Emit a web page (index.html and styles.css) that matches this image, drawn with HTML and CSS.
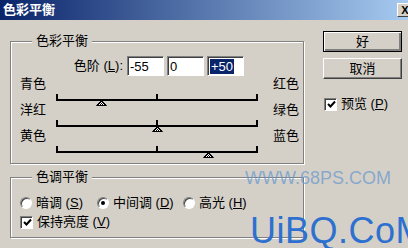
FILE: index.html
```html
<!DOCTYPE html>
<html lang="zh-CN">
<head>
    <meta charset="UTF-8">
    <title>色彩平衡</title>
    <link rel="stylesheet" href="styles.css">
</head>
<body>
    <div class="dialog">
        <div class="titlebar">
            <span class="title">色彩平衡</span>
            <span class="close">X</span>
        </div>
        <div class="main">
            <div class="left">
                <fieldset class="group balance">
                    <legend>色彩平衡</legend>
                    <div class="levels">
                        <span class="levels-label">色阶 (<u>L</u>):</span>
                        <div class="field">-55</div>
                        <div class="field">0</div>
                        <div class="field"><span class="sel">+50</span></div>
                    </div>
                    <div class="slider-row">
                        <span class="end">青色</span>
                        <div class="track">
                            <i class="tick start"></i><i class="tick mid"></i><i class="tick stop"></i>
                            <svg class="thumb" style="left:22.5%" width="11" height="6" viewBox="0 0 11 6"><use href="#tri"/></svg>
                        </div>
                        <span class="end end-right">红色</span>
                    </div>
                    <div class="slider-row">
                        <span class="end">洋红</span>
                        <div class="track">
                            <i class="tick start"></i><i class="tick mid"></i><i class="tick stop"></i>
                            <svg class="thumb" style="left:50%" width="11" height="6" viewBox="0 0 11 6"><use href="#tri"/></svg>
                        </div>
                        <span class="end end-right">绿色</span>
                    </div>
                    <div class="slider-row">
                        <span class="end">黄色</span>
                        <div class="track">
                            <i class="tick start"></i><i class="tick mid"></i><i class="tick stop"></i>
                            <svg class="thumb" style="left:75%" width="11" height="6" viewBox="0 0 11 6"><use href="#tri"/></svg>
                        </div>
                        <span class="end end-right">蓝色</span>
                    </div>
                </fieldset>
                <fieldset class="group tone">
                    <legend>色调平衡</legend>
                    <div class="radios">
                        <label class="radio shadows"><span class="dot"></span>暗调 (<u>S</u>)</label>
                        <label class="radio midtones"><span class="dot on"></span>中间调 (<u>D</u>)</label>
                        <label class="radio"><span class="dot"></span>高光 (<u>H</u>)</label>
                    </div>
                    <label class="check">
                        <span class="box"><svg width="9" height="9" viewBox="0 0 9 9"><path d="M1 4 L3.5 6.5 L8 1.5" fill="none" stroke="#000" stroke-width="2"/></svg></span>保持亮度 (<u>V</u>)
                    </label>
                </fieldset>
            </div>
            <div class="side">
                <button class="btn default">好</button>
                <button class="btn">取消</button>
                <label class="check preview">
                    <span class="box"><svg width="9" height="9" viewBox="0 0 9 9"><path d="M1 4 L3.5 6.5 L8 1.5" fill="none" stroke="#000" stroke-width="2"/></svg></span>预览 (<u>P</u>)
                </label>
            </div>
        </div>
        <div class="mark-www">WWW.68PS.COM</div>
        <div class="mark-uibq">UiBQ.CoM</div>
    </div>

    <svg width="0" height="0" class="defs">
        <defs>
            <pattern id="dither" width="2" height="2" patternUnits="userSpaceOnUse">
                <rect width="2" height="2" fill="#fff"/>
                <rect width="1" height="1" fill="#000"/>
                <rect x="1" y="1" width="1" height="1" fill="#000"/>
            </pattern>
            <polygon id="tri" points="5.5,0.5 10.5,5.5 0.5,5.5" fill="url(#dither)" stroke="#000" stroke-width="1"/>
        </defs>
    </svg>
</body>
</html>
```

FILE: styles.css
```css
body {
    margin: 0;
    background-color: #d4d0c8;
    font-family: "Liberation Sans", "Noto Sans CJK SC", sans-serif;
    font-size: 13px;
    color: #000;
    overflow: hidden;
}
.dialog {
    position: relative;
    width: 408px;
    height: 248px;
    overflow: hidden;
}
.defs {
    position: absolute;
}

/* title bar */
.titlebar {
    height: 20px;
    display: flex;
    align-items: center;
    justify-content: space-between;
    background: linear-gradient(to right, #0a246a, #a6caf0);
}
.title {
    color: #fff;
    font-weight: bold;
    line-height: 14px;
    padding-left: 3px;
}
.close {
    box-sizing: border-box;
    width: 16px;
    height: 14px;
    margin-right: -5px;
    background: #d4d0c8;
    border: 1px solid;
    border-color: #fff #404040 #404040 #fff;
    font: bold 11px/12px "Liberation Sans", sans-serif;
    text-align: center;
}

.main {
    display: flex;
}
.left {
    width: 294px;
    padding: 14px 0 0 10px;
}
.side {
    width: 79px;
    margin-left: 19px;
    padding-top: 11px;
}

/* group boxes */
.group {
    margin: 0;
    min-width: 0;
    border: 1px solid #808080;
    box-shadow: inset 1px 1px #fff, 1px 1px #fff;
}
.group legend {
    margin-left: 12px;
    padding: 0 4px;
    line-height: 14px;
    background: #d4d0c8;
}
.balance {
    padding: 8px 0 8px 9px;
}
.tone {
    margin-top: 6px;
    padding: 11px 0 7px 9px;
}

/* levels inputs */
.levels {
    display: flex;
    align-items: center;
    height: 20px;
    margin-bottom: 1px;
}
.levels-label {
    width: 103px;
    text-align: right;
    line-height: 14px;
    padding-right: 2px;
}
.field {
    box-sizing: border-box;
    width: 37px;
    height: 20px;
    margin-left: 3px;
    padding: 2px 0 0 2px;
    background: #fff;
    border: 1px solid;
    border-color: #808080 #fff #fff #808080;
    box-shadow: inset 1px 1px #404040;
    line-height: 15px;
}
.field:first-of-type {
    margin-left: 2px;
}
.sel {
    display: inline-block;
    background: #0a246a;
    color: #fff;
    padding: 0 1px;
}

/* sliders */
.slider-row {
    display: flex;
    align-items: flex-start;
    height: 26px;
}
.end {
    flex: none;
    width: 36px;
    line-height: 14px;
    white-space: nowrap;
}
.end-right {
    width: auto;
    margin-left: 15px;
}
.track {
    flex: none;
    position: relative;
    width: 202px;
    height: 22px;
    border-bottom: 2px solid #000;
}
.tick {
    position: absolute;
    bottom: 0;
    width: 2px;
    height: 5px;
    background: #000;
}
.tick.start {
    left: 0;
}
.tick.mid {
    left: calc(50% - 1px);
}
.tick.stop {
    right: 0;
}
.thumb {
    position: absolute;
    top: 100%;
    margin: 1px 0 0 -5px;
}

/* radios and checks */
.radios {
    display: flex;
    height: 16px;
    align-items: center;
}
.radio, .check {
    display: flex;
    align-items: center;
    line-height: 14px;
}
.radio.shadows {
    width: 77px;
}
.radio.midtones {
    width: 86px;
}
.dot {
    box-sizing: border-box;
    width: 12px;
    height: 12px;
    margin-right: 4px;
    border-radius: 50%;
    background: #fff;
    border: 1px solid;
    border-color: #808080 #fff #fff #808080;
    box-shadow: inset 1px 1px #404040;
    display: flex;
    align-items: center;
    justify-content: center;
}
.dot.on::after {
    content: "";
    width: 4px;
    height: 4px;
    border-radius: 50%;
    background: #000;
}
.check {
    margin-top: 3px;
    height: 16px;
}
.box {
    box-sizing: border-box;
    width: 13px;
    height: 13px;
    margin-right: 4px;
    background: #fff;
    border: 1px solid;
    border-color: #808080 #fff #fff #808080;
    box-shadow: inset 1px 1px #404040;
    display: flex;
    align-items: center;
    justify-content: center;
    padding: 1px 0 0 1px;
}

/* buttons */
.btn {
    display: block;
    box-sizing: border-box;
    width: 79px;
    height: 21px;
    margin-bottom: 6px;
    background: #d4d0c8;
    border: 1px solid;
    border-color: #fff #404040 #404040 #fff;
    box-shadow: inset -1px -1px #808080;
    font: 13px/14px "Liberation Sans", "Noto Sans CJK SC", sans-serif;
    color: #000;
    padding: 0;
}
.btn.default {
    border: 1px solid #000;
    box-shadow: inset 1px 1px #fff, inset -2px -2px #808080;
}
.preview {
    margin-top: 17px;
    padding-left: 1px;
}

/* watermarks */
.mark-www {
    position: absolute;
    left: 245px;
    top: 168px;
    font: 18px/20px "Liberation Sans", sans-serif;
    color: rgba(100, 150, 205, 0.7);
}
.mark-uibq {
    position: absolute;
    left: 250px;
    top: 216px;
    font: 36px/30px "Liberation Sans", sans-serif;
    letter-spacing: 0.5px;
    color: #2d70d0;
}
```
